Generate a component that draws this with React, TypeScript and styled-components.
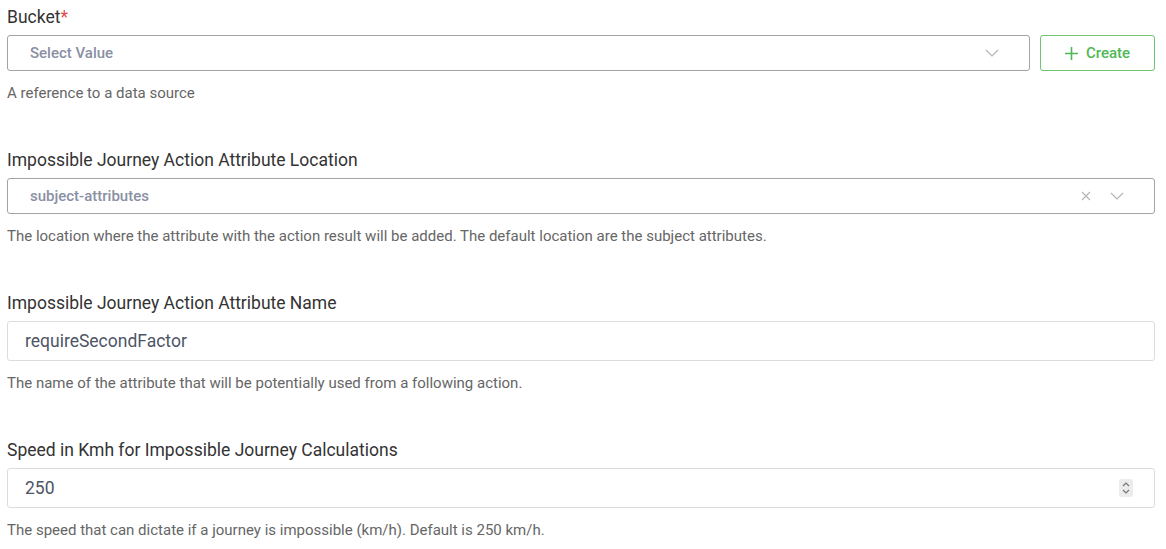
import React, { useState } from "react";
import styled, { createGlobalStyle } from "styled-components";

const GlobalStyle = createGlobalStyle`
  body {
    margin: 0;
    background: #ffffff;
    font-family: Roboto, "Liberation Sans", Arial, sans-serif;
  }
`;

const Form = styled.main`
  display: flex;
  flex-direction: column;
  gap: 45px;
  padding: 5px 11px 0 7px;
`;

const Field = styled.section`
  display: flex;
  flex-direction: column;
`;

const Label = styled.label`
  font-size: 17.5px;
  line-height: 24px;
  color: #333333;
  margin-bottom: 6px;
`;

const Required = styled.span`
  color: #e5484d;
`;

const Row = styled.div`
  display: flex;
  gap: 10px;
`;

const SelectBox = styled.div`
  flex: 1 1 auto;
  height: 36px;
  box-sizing: border-box;
  border: 1px solid #a3a3a3;
  border-radius: 3px;
  display: flex;
  align-items: center;
  padding: 0 30px 0 22px;
  color: #8a8fa3;
  font-size: 15px;
  font-weight: 500;
`;

const SelectValue = styled.span`
  flex: 1;
`;

const IconSlot = styled.span`
  display: flex;
  align-items: center;
  margin-left: 19px;
`;

const CreateButton = styled.button`
  width: 115px;
  height: 36px;
  box-sizing: border-box;
  border: 1px solid #6ec472;
  border-radius: 3px;
  background: #fff;
  color: #4fb856;
  font-family: inherit;
  font-size: 15px;
  font-weight: 500;
  display: flex;
  align-items: center;
  justify-content: center;
  gap: 8px;
`;

const TextInput = styled.input`
  height: 40px;
  box-sizing: border-box;
  border: 1px solid #dcdcdc;
  border-radius: 3px;
  padding: 0 17px;
  font-family: inherit;
  font-size: 17.5px;
  color: #4d5566;
  outline: none;
  width: 100%;
`;

const NumberWrap = styled.div`
  position: relative;
  display: flex;
`;

const Spinner = styled.span`
  position: absolute;
  right: 22px;
  top: 11px;
  width: 14px;
  height: 18px;
  border-radius: 3px;
  background: #ececec;
  display: flex;
  align-items: center;
  justify-content: center;
`;

const Help = styled.p`
  margin: 12px 0 0;
  font-size: 15px;
  line-height: 20px;
  color: #666666;
`;

const Chevron = () => (
  <svg width="14" height="8" viewBox="0 0 14 8" fill="none">
    <path d="M1 1l6 6 6-6" stroke="#b5b5b5" strokeWidth="1.2" />
  </svg>
);

const Cross = () => (
  <svg width="10" height="10" viewBox="0 0 10 10" fill="none">
    <path d="M1 1l8 8M9 1l-8 8" stroke="#b5b5b5" strokeWidth="1.2" />
  </svg>
);

const Plus = () => (
  <svg width="13" height="13" viewBox="0 0 13 13" fill="none">
    <path d="M6.5 0v13M0 6.5h13" stroke="#4fb856" strokeWidth="1.6" />
  </svg>
);

const SpinIcon = () => (
  <svg width="8" height="12" viewBox="0 0 8 12" fill="none">
    <path d="M1 4l3-3 3 3M1 8l3 3 3-3" stroke="#777" strokeWidth="1.2" />
  </svg>
);

export default function App() {
  const [attrName, setAttrName] = useState("requireSecondFactor");
  const [speed, setSpeed] = useState("250");

  return (
    <>
      <GlobalStyle />
      <Form>
        <Field>
          <Label>
            Bucket<Required>*</Required>
          </Label>
          <Row>
            <SelectBox>
              <SelectValue>Select Value</SelectValue>
              <IconSlot>
                <Chevron />
              </IconSlot>
            </SelectBox>
            <CreateButton>
              <Plus />
              Create
            </CreateButton>
          </Row>
          <Help>A reference to a data source</Help>
        </Field>

        <Field>
          <Label>Impossible Journey Action Attribute Location</Label>
          <SelectBox>
            <SelectValue>subject-attributes</SelectValue>
            <IconSlot>
              <Cross />
            </IconSlot>
            <IconSlot>
              <Chevron />
            </IconSlot>
          </SelectBox>
          <Help>
            The location where the attribute with the action result will be added. The default
            location are the subject attributes.
          </Help>
        </Field>

        <Field>
          <Label>Impossible Journey Action Attribute Name</Label>
          <TextInput value={attrName} onChange={(e) => setAttrName(e.target.value)} />
          <Help>The name of the attribute that will be potentially used from a following action.</Help>
        </Field>

        <Field>
          <Label>Speed in Kmh for Impossible Journey Calculations</Label>
          <NumberWrap>
            <TextInput value={speed} onChange={(e) => setSpeed(e.target.value)} />
            <Spinner>
              <SpinIcon />
            </Spinner>
          </NumberWrap>
          <Help>The speed that can dictate if a journey is impossible (km/h). Default is 250 km/h.</Help>
        </Field>
      </Form>
    </>
  );
}
